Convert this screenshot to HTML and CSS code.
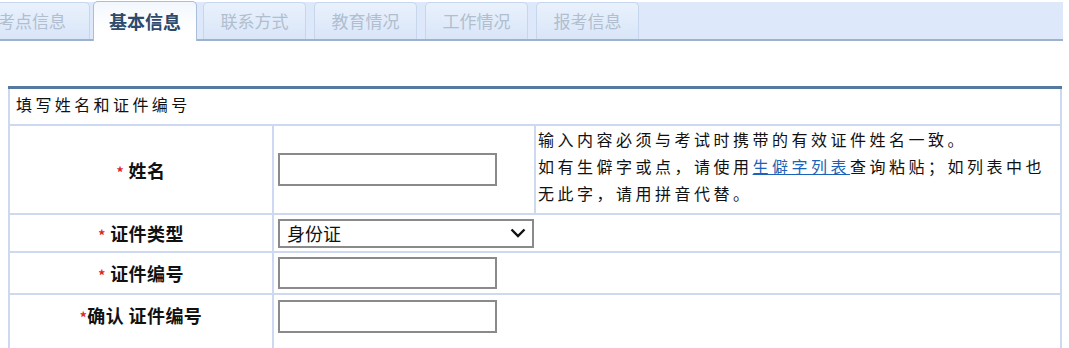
FILE: index.html
```html
<!DOCTYPE html>
<html lang="zh-CN">
<head>
    <meta charset="UTF-8">
    <title>基本信息</title>
    <link rel="stylesheet" href="styles.css">
</head>
<body>
    <div class="tabs">
        <div class="tab first">考点信息</div>
        <div class="tab active">基本信息</div>
        <div class="tab">联系方式</div>
        <div class="tab">教育情况</div>
        <div class="tab">工作情况</div>
        <div class="tab">报考信息</div>
    </div>

    <table class="form-table">
        <colgroup>
            <col class="col-label">
            <col class="col-field">
            <col>
        </colgroup>
        <tr class="head-row">
            <td colspan="3">填写姓名和证件编号</td>
        </tr>
        <tr class="name-row">
            <td class="label"><span class="req">*</span> 姓名</td>
            <td class="field"><input type="text" class="text-input"></td>
            <td class="note">输入内容必须与考试时携带的有效证件姓名一致。<br>如有生僻字或点，请使用<a href="#">生僻字列表</a>查询粘贴；如列表中也<br>无此字，请用拼音代替。</td>
        </tr>
        <tr class="type-row">
            <td class="label"><span class="req">*</span> 证件类型</td>
            <td class="field" colspan="2">
                <div class="select">
                    <span>身份证</span>
                    <svg width="16" height="10" viewBox="0 0 16 10"><path d="M1.5 1.5 L8 8 L14.5 1.5" fill="none" stroke="#111" stroke-width="2.4"/></svg>
                </div>
            </td>
        </tr>
        <tr class="id-row">
            <td class="label"><span class="req">*</span> 证件编号</td>
            <td class="field" colspan="2"><input type="text" class="text-input"></td>
        </tr>
        <tr class="confirm-row">
            <td class="label"><span class="req">*</span>确认 证件编号</td>
            <td class="field" colspan="2"><input type="text" class="text-input"></td>
        </tr>
    </table>
</body>
</html>
```

FILE: styles.css
```css
body {
    margin: 0;
    background-color: #fff;
    font-family: "Noto Sans CJK SC", sans-serif;
    color: #111;
}
.tabs {
    display: flex;
    align-items: flex-end;
    width: 1063px;
    height: 37px;
    margin-top: 2px;
    background-color: #dde9fa;
    border-bottom: 2px solid #9db3cd;
}
.tab {
    box-sizing: border-box;
    flex-shrink: 0;
    width: 103px;
    height: 37px;
    margin-right: 8px;
    border: 1px solid #c6d6ec;
    border-bottom: none;
    border-radius: 5px 5px 0 0;
    background: linear-gradient(#e9f1fc, #d9e6f8);
    color: #b0bed0;
    font-size: 17px;
    line-height: 35px;
    text-align: center;
}
.tab.first {
    width: 108px;
    margin-left: -18px;
    margin-right: 3px;
    padding-right: 8px;
}
.tab.active {
    width: 104px;
    height: 40px;
    margin-bottom: -2px;
    margin-right: 6px;
    border-color: #a9bed8;
    background: linear-gradient(#f2f7fd, #ffffff 70%);
    color: #2d4a6d;
    font-weight: bold;
    font-size: 18px;
    line-height: 38px;
}
.form-table {
    width: 1054px;
    margin: 45px 0 0 8px;
    border-collapse: collapse;
    font-size: 16px;
    letter-spacing: 3.4px;
}
.col-label {
    width: 264px;
}
.col-field {
    width: 262px;
}
.form-table td {
    border: 2px solid #cdd8f1;
    padding: 0 4px;
}
.head-row td {
    border-top: 3px solid #56799f;
    height: 30px;
    padding-left: 6px;
    padding-bottom: 5px;
}
.name-row td {
    height: 80px;
}
.type-row td {
    height: 36px;
}
.id-row td {
    height: 40px;
}
.confirm-row td {
    height: 48px;
    vertical-align: top;
    padding-top: 5px;
}
.confirm-row .label {
    padding-top: 7px;
}
.label {
    text-align: center;
    font-size: 18px;
    font-weight: bold;
    letter-spacing: 0.4px;
}
.req {
    color: #e0251d;
    font-size: 14px;
    font-weight: bold;
}
.text-input {
    box-sizing: border-box;
    width: 219px;
    height: 33px;
    margin: 0;
    border: 2px solid #8a8a8a;
    background-color: #fff;
    display: block;
}
.id-row .text-input {
    height: 32px;
}
.select {
    box-sizing: border-box;
    display: flex;
    align-items: center;
    justify-content: space-between;
    width: 256px;
    height: 29px;
    padding: 0 6px 0 7px;
    border: 2px solid #8a8a8a;
    font-size: 18px;
    letter-spacing: 0;
}
.name-row .note {
    height: auto;
    line-height: 27px;
    padding: 0 4px 6px 2px;
    letter-spacing: 3.5px;
}
.note a {
    color: #1b63b8;
    text-decoration: underline;
}
```
